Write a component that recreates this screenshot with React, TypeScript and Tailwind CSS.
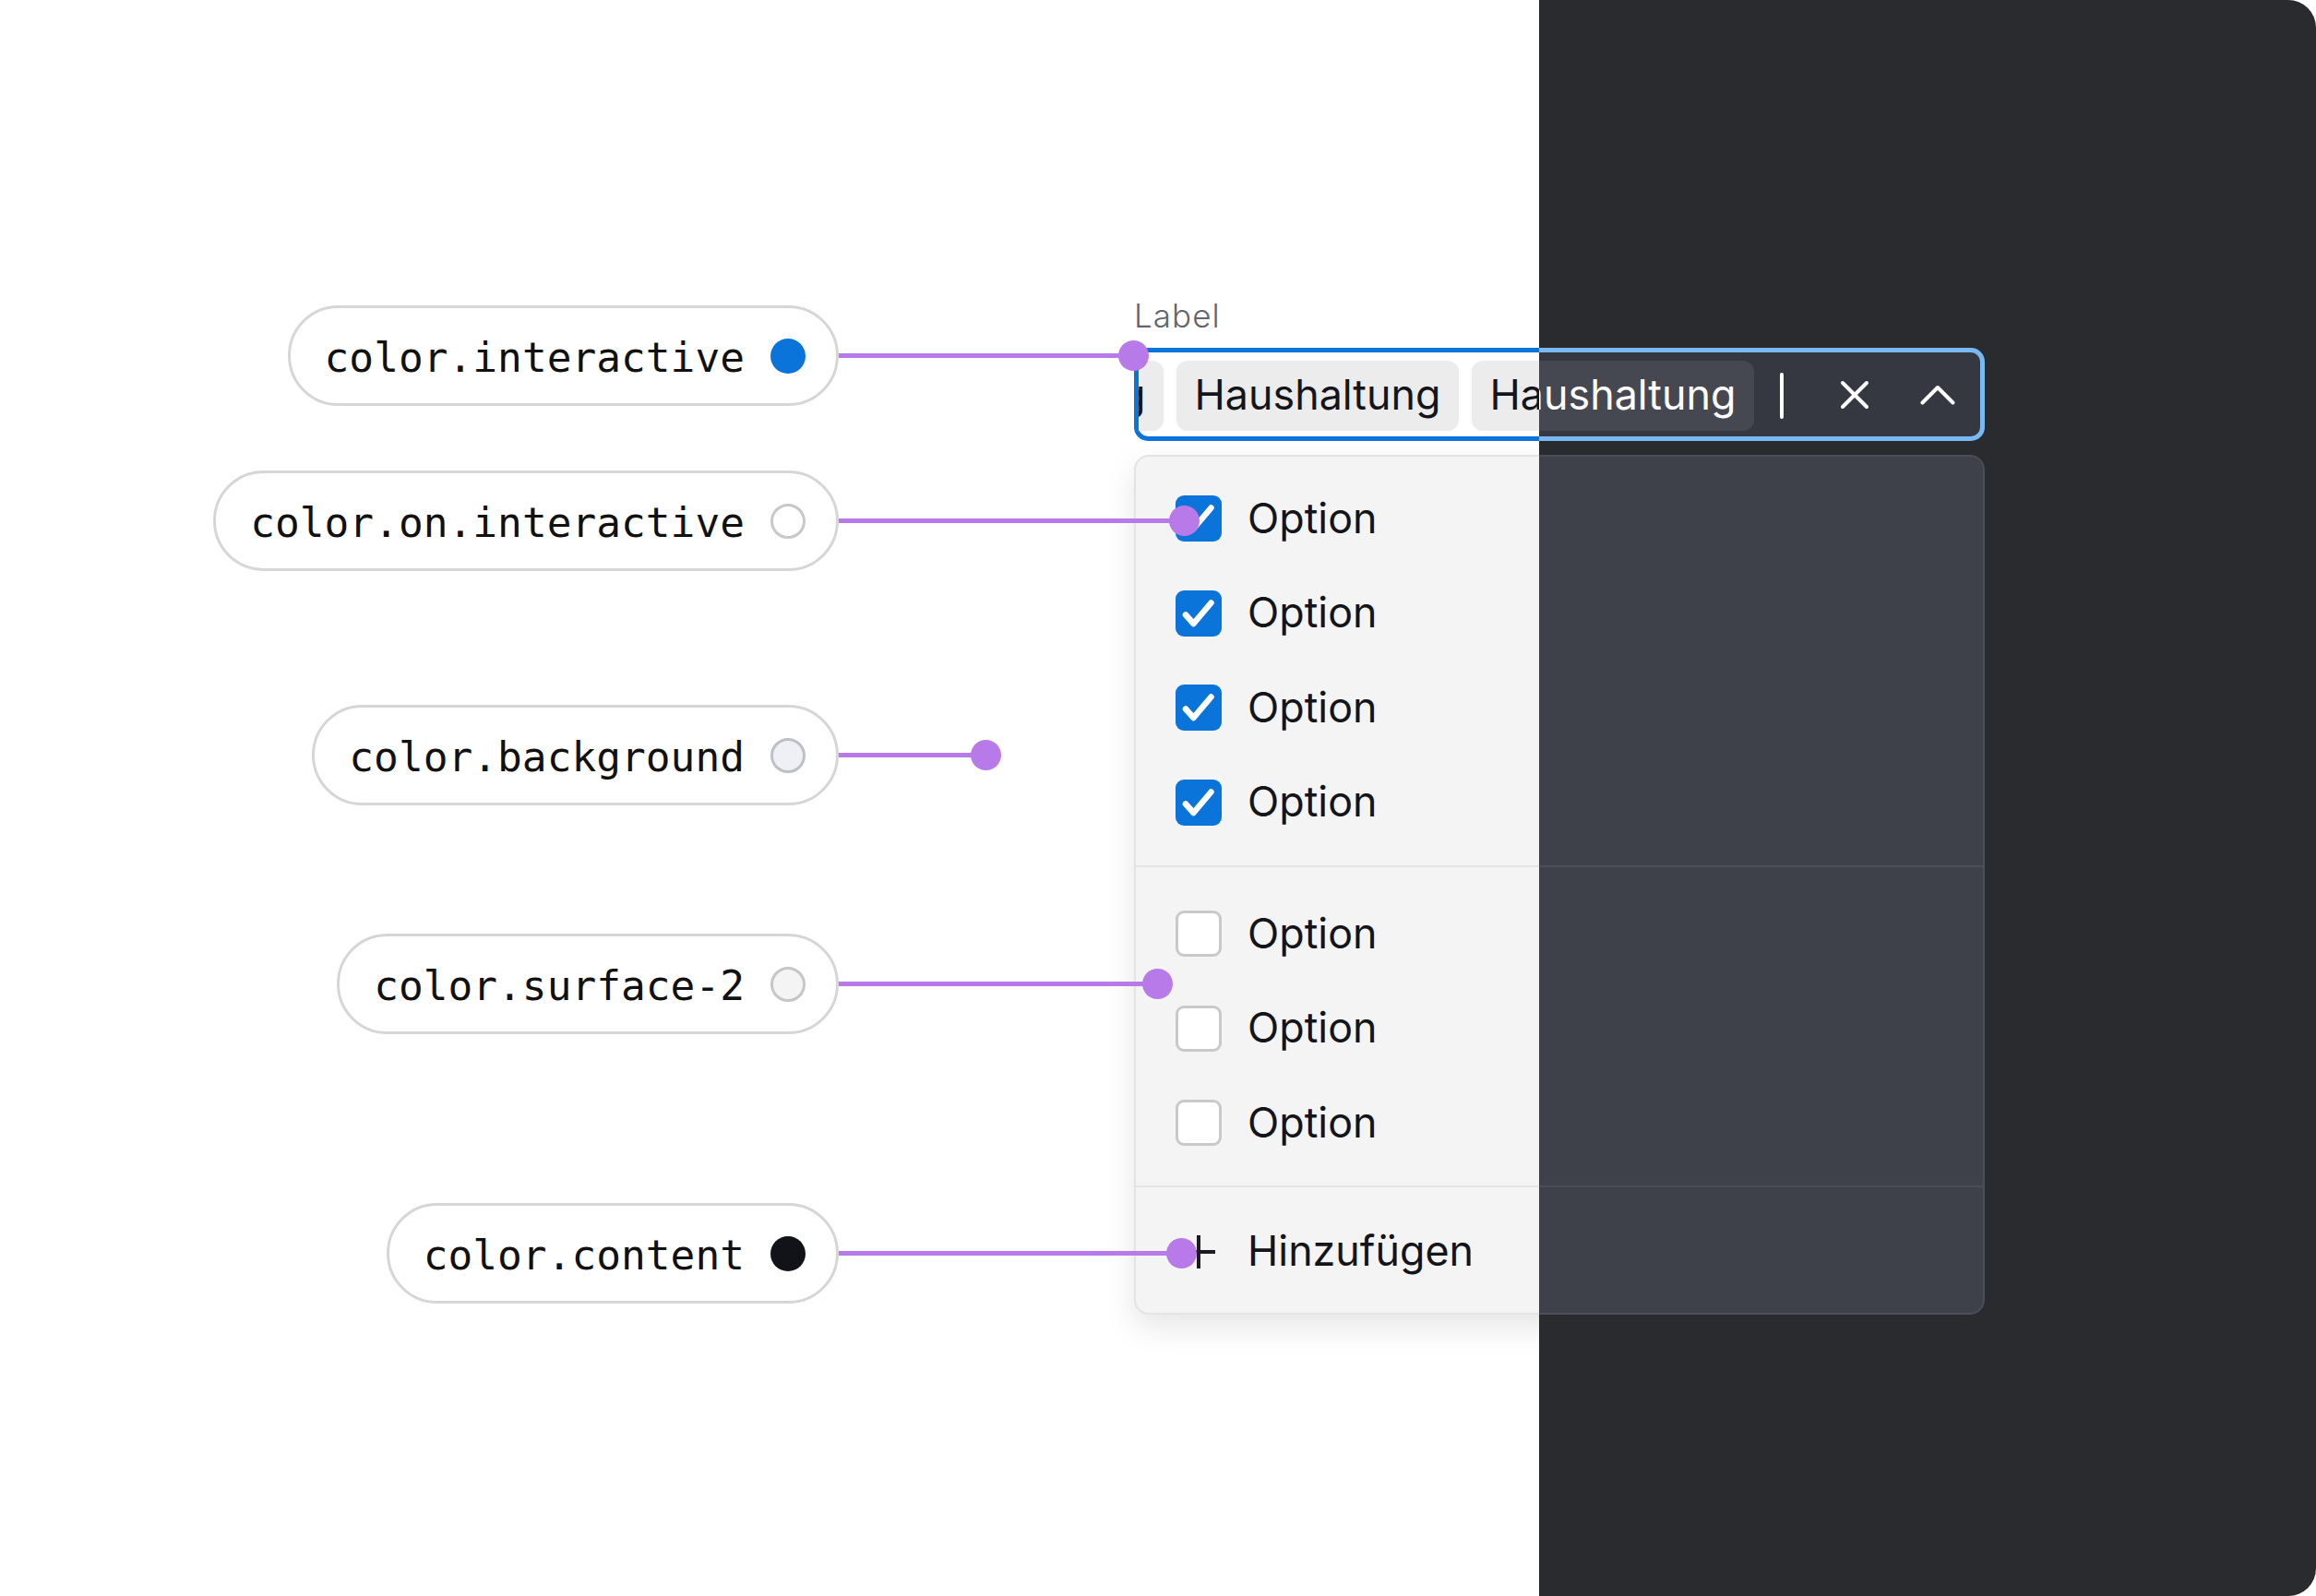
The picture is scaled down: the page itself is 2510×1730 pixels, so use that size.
import React from "react";

function CheckBoxOn() {
  return (
    <div className="w-[50px] h-[50px] rounded-[9px] bg-[#0b74da] flex items-center justify-center shrink-0">
      <svg viewBox="0 0 50 50" className="w-[50px] h-[50px]">
        <path d="M11 26.5 L19.5 36 L38.5 13.5" fill="none" stroke="#ffffff" strokeWidth="6.5" strokeLinecap="round" strokeLinejoin="round" />
      </svg>
    </div>
  );
}

function CheckBoxOff({ dark }: { dark: boolean }) {
  return (
    <div
      className={
        dark
          ? "w-[50px] h-[50px] rounded-[9px] bg-[#2f3139] border-[3px] border-[#5b5e67] shrink-0"
          : "w-[50px] h-[50px] rounded-[9px] bg-white border-[3px] border-[#c9c9c9] shrink-0"
      }
    />
  );
}

function Row({ children }: { children: React.ReactNode }) {
  return <div className="h-[102.5px] flex items-center pl-[43px] gap-[28px]">{children}</div>;
}

function Widget({ dark }: { dark: boolean }) {
  const text = dark ? "text-white" : "text-[#14151a]";
  const chip = dark
    ? "h-[76px] w-[306px] shrink-0 rounded-[12px] bg-[#464851] flex items-center justify-center text-[44.8px] text-white"
    : "h-[76px] w-[306px] shrink-0 rounded-[12px] bg-[#ececec] flex items-center justify-center text-[44.8px] text-[#14151a]";
  const stroke = dark ? "#ffffff" : "#1b1c21";
  const divider = dark ? "h-[2px] bg-[#4b4e58]" : "h-[2px] bg-[#e4e4e4]";
  return (
    <div className="w-[922px] font-['Inter',sans-serif]">
      <div className={dark ? "h-[34px] leading-[34px] text-[35px] tracking-[0.03em] font-light text-[#9a9ea6]" : "h-[34px] leading-[34px] text-[35px] tracking-[0.03em] font-light text-[#62656d]"}>
        Label
      </div>
      <div
        className={
          dark
            ? "mt-[18px] h-[101px] rounded-[15px] border-[5px] border-[#78b9f4] bg-[#363841] flex items-center"
            : "mt-[18px] h-[101px] rounded-[15px] border-[5px] border-[#0b74da] bg-white flex items-center"
        }
      >
        <div className="flex-1 min-w-0 overflow-hidden h-full flex items-center">
          <div className="flex items-center gap-[14px] ml-[-279px] shrink-0 pt-[2px]">
            <div className={chip}>Haushaltung</div>
            <div className={chip}>Haushaltung</div>
            <div className={chip}>Haushaltung</div>
            <div className={dark ? "ml-[14px] w-[4px] h-[50px] rounded-[2px] bg-white" : "ml-[14px] w-[4px] h-[50px] rounded-[2px] bg-[#14151a]"} />
          </div>
        </div>
        <div className="ml-[40px] w-[40px] h-[40px] flex items-center justify-center shrink-0">
          <svg viewBox="0 0 32 32" className="w-[32px] h-[32px]">
            <path d="M3 3 L29 29 M29 3 L3 29" stroke={stroke} strokeWidth="4" strokeLinecap="round" fill="none" />
          </svg>
        </div>
        <div className="ml-[50px] mr-[26px] w-[40px] h-[40px] flex items-center justify-center shrink-0">
          <svg viewBox="0 0 38 22" className="w-[38px] h-[22px]">
            <path d="M2.5 19.5 L19 3 L35.5 19.5" stroke={stroke} strokeWidth="4" strokeLinecap="round" strokeLinejoin="round" fill="none" />
          </svg>
        </div>
      </div>
      <div
        className={
          dark
            ? "mt-[15px] rounded-[16px] border-2 border-[#4b4e58] bg-[#3e414a]"
            : "mt-[15px] rounded-[16px] border-2 border-[#e3e3e3] bg-[#f4f4f4] shadow-[0_14px_34px_rgba(0,0,0,0.10)]"
        }
      >
        <div className={"pt-[16px] pb-[17px] text-[44.8px] " + text}>
          <Row><CheckBoxOn /><span>Option</span></Row>
          <Row><CheckBoxOn /><span>Option</span></Row>
          <Row><CheckBoxOn /><span>Option</span></Row>
          <Row><CheckBoxOn /><span>Option</span></Row>
        </div>
        <div className={divider} />
        <div className={"pt-[21px] pb-[16px] text-[44.8px] " + text}>
          <Row><CheckBoxOff dark={dark} /><span>Option</span></Row>
          <Row><CheckBoxOff dark={dark} /><span>Option</span></Row>
          <Row><CheckBoxOff dark={dark} /><span>Option</span></Row>
        </div>
        <div className={divider} />
        <div className={"pt-[19px] pb-[15px] text-[44.8px] " + text}>
          <Row>
            <div className="w-[50px] h-[50px] flex items-center justify-center shrink-0">
              <svg viewBox="0 0 40 40" className="w-[40px] h-[40px]">
                <path d="M20 2 L20 38 M2 20 L38 20" stroke={stroke} strokeWidth="4" fill="none" />
              </svg>
            </div>
            <span>Hinzufügen</span>
          </Row>
        </div>
      </div>
    </div>
  );
}

function Pill({ label, circle }: { label: string; circle: string }) {
  return (
    <div className="flex items-center h-[109px] rounded-full border-[3px] border-[#d6d6d6] bg-white pl-[37px] pr-[33px] gap-[28px]">
      <span className="font-['DejaVu_Sans_Mono',monospace] text-[44.5px] leading-none text-[#111111] whitespace-nowrap mt-[5px]">{label}</span>
      <div className={circle} />
    </div>
  );
}

function Annot({ label, circle, row, line }: { label: string; circle: string; row: string; line: string }) {
  return (
    <div className={row}>
      <div className="w-[909px] flex justify-end shrink-0">
        <Pill label={label} circle={circle} />
      </div>
      <div className={line} />
      <div className="w-[33px] h-[33px] rounded-full bg-[#b77ae8] ml-[-16px] shrink-0" />
    </div>
  );
}

export default function App() {
  return (
    <div className="relative w-[2510px] h-[1730px] bg-white overflow-hidden">
      <div className="pl-[1229px] pt-[325px]">
        <Widget dark={false} />
      </div>

      <div className="absolute top-0 bottom-0 left-[1668px] right-0 bg-[#2a2b2f] rounded-r-[30px] overflow-hidden">
        <div className="ml-[-439px] pt-[325px]">
          <Widget dark={true} />
        </div>
      </div>

      <div className="absolute inset-0 flex flex-col pointer-events-none">
        <Annot
          label="color.interactive"
          circle="w-[38px] h-[38px] rounded-full bg-[#0b74da] shrink-0"
          row="flex items-center h-[109px] mt-[331px]"
          line="h-[5px] w-[319px] bg-[#b77ae8] shrink-0"
        />
        <Annot
          label="color.on.interactive"
          circle="w-[38px] h-[38px] rounded-full bg-white border-[3px] border-[#c8c8cc] shrink-0"
          row="flex items-center h-[109px] mt-[70px]"
          line="h-[5px] w-[374px] bg-[#b77ae8] shrink-0"
        />
        <Annot
          label="color.background"
          circle="w-[38px] h-[38px] rounded-full bg-[#eef0f5] border-[3px] border-[#bfc0c6] shrink-0"
          row="flex items-center h-[109px] mt-[145px]"
          line="h-[5px] w-[159px] bg-[#b77ae8] shrink-0"
        />
        <Annot
          label="color.surface-2"
          circle="w-[38px] h-[38px] rounded-full bg-[#f4f4f4] border-[3px] border-[#c6c6c6] shrink-0"
          row="flex items-center h-[109px] mt-[139px]"
          line="h-[5px] w-[345px] bg-[#b77ae8] shrink-0"
        />
        <Annot
          label="color.content"
          circle="w-[38px] h-[38px] rounded-full bg-[#111318] shrink-0"
          row="flex items-center h-[109px] mt-[183px]"
          line="h-[5px] w-[371px] bg-[#b77ae8] shrink-0"
        />
      </div>
    </div>
  );
}
